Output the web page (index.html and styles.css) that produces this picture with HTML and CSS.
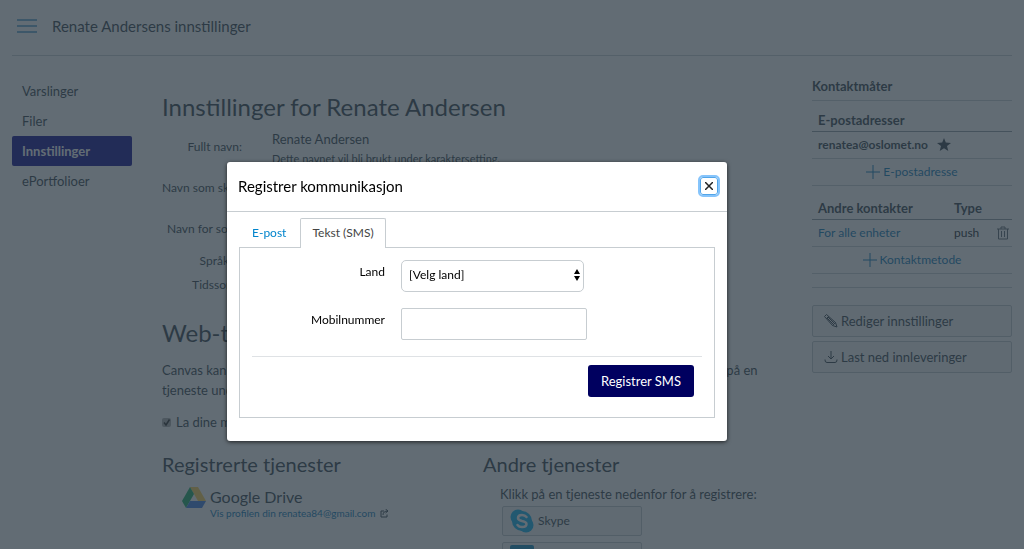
FILE: index.html
```html
<!DOCTYPE html>
<html lang="no">
<head>
<meta charset="utf-8">
<title>Renate Andersens innstillinger</title>
<link rel="stylesheet" href="styles.css">
</head>
<body>
<div class="app">
  <header class="topbar">
    <button class="menu-btn" aria-label="Meny"><svg width="22" height="16" viewBox="0 0 22 16"><path d="M1 2H21M1 8H21M1 14H21" stroke="#3d91c4" stroke-width="1.3" fill="none"/></svg></button>
    <span class="crumb">Renate Andersens innstillinger</span>
  </header>
  <div class="columns">
    <nav class="sidenav">
      <a href="#">Varslinger</a>
      <a href="#">Filer</a>
      <a href="#" class="active">Innstillinger</a>
      <a href="#">ePortfolioer</a>
    </nav>
    <main class="content">
      <h1>Innstillinger for Renate Andersen</h1>
      <dl class="profile">
        <dt class="name-label">Fullt navn:</dt>
        <dd class="name-value"><span>Renate Andersen</span><small>Dette navnet vil bli brukt under karaktersetting.</small></dd>
        <dt class="display-label">Navn som skal vises:</dt><dd></dd>
        <dt class="sort-label">Navn for sortering:</dt><dd></dd>
        <dt class="lang-label">Språk:</dt><dd></dd>
        <dt class="zone-label">Tidssone:</dt><dd></dd>
      </dl>
      <h2>Web-tjenester</h2>
      <p class="intro">Canvas kan gjøre livet ditt enklere ved å knytte seg til verktøy som du kanskje allerede bruker. Klikk på en tjeneste under.</p>
      <label class="check"><input type="checkbox" checked><span class="box"><svg width="9" height="9" viewBox="0 0 9 9"><path d="M2 4.5L4 7L7.500 1.500" fill="none" stroke="#222" stroke-width="1.500"/></svg></span>La dine medstudenter se</label>
      <div class="services">
        <section>
          <h3>Registrerte tjenester</h3>
          <div class="drive">
            <svg width="24" height="22" viewBox="0 0 24 22"><path d="M8 0L16 0L24 14H16Z" fill="#ffd04b"/><path d="M8 0L12 7L4 21L0 14Z" fill="#11a861"/><path d="M8 14H24L20 21H4Z" fill="#3777e3"/></svg>
            <div><div class="drive-name">Google Drive</div>
            <a href="#">Vis profilen din renatea84@gmail.com <svg width="9" height="9" viewBox="0 0 9 9"><path d="M4 2H1V8H7V5.500M3 6Q3 2 8 2M5.500 0L8 2L5.500 4" fill="none" stroke="#2d3b45"/></svg></a></div>
          </div>
        </section>
        <section>
          <h3>Andre tjenester</h3>
          <p>Klikk på en tjeneste nedenfor for å registrere:</p>
          <button class="service"><svg width="24" height="24" viewBox="0 0 24 24"><circle cx="8" cy="8" r="7.500" fill="#00aff0"/><circle cx="16" cy="16" r="7.500" fill="#00aff0"/><circle cx="12" cy="12" r="10" fill="#00aff0"/><path d="M16.500 8Q15 6 12 6Q8 6 8 9Q8 11 12 12Q16.500 13 16.500 15Q16.500 18 12 18Q9 18 7.500 16" fill="none" stroke="#fff" stroke-width="2.500" stroke-linecap="round"/></svg>Skype</button>
          <button class="service" aria-label="LinkedIn"><svg width="24" height="24" viewBox="0 0 24 24"><rect width="24" height="24" rx="2" fill="#0083bd"/></svg></button>
        </section>
      </div>
    </main>
    <aside class="contacts">
      <h4>Kontaktmåter</h4>
      <table class="mail">
        <thead><tr><th>E-postadresser</th></tr></thead>
        <tbody>
          <tr><td><span class="address"><b>renatea@oslomet.no</b><svg width="14" height="13" viewBox="0 0 14 13"><path d="M7 0L8.800 4.600L14 4.900L10 8L11.300 13L7 10.200L2.700 13L4 8L0 4.900L5.200 4.600Z" fill="#2d3b45"/></svg></span></td></tr>
          <tr><td class="add"><a href="#"><svg width="14" height="14" viewBox="0 0 14 14"><path d="M7 0V14M0 7H14" stroke="#0374b5"/></svg>E-postadresse</a></td></tr>
        </tbody>
      </table>
      <table class="others">
        <thead><tr><th>Andre kontakter</th><th>Type</th><th></th></tr></thead>
        <tbody>
          <tr><td><a href="#">For alle enheter</a></td><td class="type">push</td><td class="trash"><svg width="12" height="14" viewBox="0 0 12 14"><path d="M0 3H12M4 3V1H8V3M1.500 3V13H10.500V3M4.500 5V11M7.500 5V11" fill="none" stroke="#56626b"/></svg></td></tr>
          <tr><td class="add" colspan="3"><a href="#"><svg width="14" height="14" viewBox="0 0 14 14"><path d="M7 0V14M0 7H14" stroke="#0374b5"/></svg>Kontaktmetode</a></td></tr>
        </tbody>
      </table>
      <div class="actions">
        <button><svg width="14" height="14" viewBox="0 0 14 14"><path d="M.5 2.500L2.500 .5L11.500 8.500L13 13L8.500 11.500ZM2.500 4.500L4.500 2.500M4 3L11 10M3 4L10 11M8.500 11.500L11.500 8.500" fill="none" stroke="#2d3b45"/></svg>Rediger innstillinger</button>
        <button><svg width="14" height="14" viewBox="0 0 14 14"><path d="M7 1V9M4 6L7 9L10 6M1 9.500V10Q1 12.500 3 12.500H11Q13 12.500 13 10V9.500" fill="none" stroke="#2d3b45"/></svg>Last ned innleveringer</button>
      </div>
    </aside>
  </div>
</div>
<div class="overlay">
  <div class="modal" role="dialog" aria-labelledby="modal-title">
    <div class="modal-head">
      <h2 id="modal-title">Registrer kommunikasjon</h2>
      <button class="close" aria-label="Lukk"><svg width="8" height="8" viewBox="0 0 8 8"><path d="M0 0L8 8M8 0L0 8" stroke="#222" stroke-width="1.500"/></svg></button>
    </div>
    <div class="modal-body">
      <div class="tabs" role="tablist">
        <a href="#" role="tab">E-post</a>
        <a href="#" role="tab" class="selected" aria-selected="true">Tekst (SMS)</a>
      </div>
      <form class="panel">
        <div class="row"><label for="country">Land</label><span class="select"><select id="country"><option>[Velg land]</option></select><svg width="6" height="12" viewBox="0 0 6 12"><path d="M3 0L6 5H0ZM3 12L6 7H0Z"/></svg></span></div>
        <div class="row"><label for="mobile">Mobilnummer</label><input id="mobile" type="tel"></div>
        <div class="foot"><button type="button">Registrer SMS</button></div>
      </form>
    </div>
  </div>
</div>
</body>
</html>
```
FILE: styles.css
```css
* { box-sizing: border-box; }
html, body { height: 100%; }
body { margin: 0; overflow: hidden; background: #fff; color: #2d3b45; font: 13px/20px Lato, "Liberation Sans", sans-serif; }
button, input, select { font: inherit; color: inherit; }
h1, h2, h3, h4, p, dl, dd { margin: 0; font-weight: 400; }
a { color: #0374b5; text-decoration: none; }
svg { display: block; flex: none; }

.app { padding: 0 12px; height: 100%; overflow: hidden; }
.topbar { display: flex; align-items: center; gap: 14px; height: 56px; padding: 0 4px 4px; border-bottom: 1px solid #c7cdd1; }
.menu-btn { padding: 0; border: 0; background: none; }
.crumb { font-size: 15px; }
.columns { display: grid; grid-template-columns: 120px minmax(0, 1fr) 200px; }

.sidenav { padding-top: 20px; }
.sidenav a { display: block; padding: 5px 10px; border-radius: 2px; color: #2d3b45; }
.sidenav .active { background: #00008c; color: #fff; font-weight: 700; }

.content { padding: 34px 48px 0 30px; }
h1, .content h2 { font-size: 24px; line-height: 34px; }
.profile { display: grid; grid-template-columns: 80px 1fr; grid-template-rows: 38px 42px 40px 24px 24px; column-gap: 30px; margin-top: 5px; }
.profile dt { justify-self: end; white-space: nowrap; font-size: 12px; align-self: center; }
.profile dd { align-self: center; }
.profile .name-value { align-self: start; }
.profile small { display: block; font-size: 11px; }
.profile .display-label, .profile .sort-label { justify-self: start; }
.profile .sort-label { padding-left: 5px; }
.profile .lang-label { padding-right: 10px; }
.profile .name-label { align-self: start; padding-top: 8px; }
.content h2 { margin-top: 19px; }
.intro { margin-top: 10px; max-width: 600px; }
.check { display: flex; align-items: center; gap: 5px; margin-top: 12px; }
.check input { position: absolute; opacity: 0; }
.box { border-radius: 2px; background: #aaa; }
.services { display: grid; grid-template-columns: 321px 1fr; margin-top: 19px; white-space: nowrap; }
h3 { font-size: 20px; line-height: 26px; }
.drive { display: flex; gap: 4px; align-items: flex-start; padding: 10px 0 0 20px; }
.drive-name { font-size: 16px; }
.drive a { display: flex; align-items: center; gap: 5px; font-size: 10px; line-height: 12px; }
.services p { padding: 7px 0 2px 17px; }
.service { display: flex; align-items: center; gap: 4px; width: 140px; height: 30px; margin: 0 0 6px 19px; padding: 0 7px; border: 1px solid #c0c6ca; border-radius: 2px; background: #f5f5f5; font-size: 12px; }

.contacts { padding-top: 20px; font-size: 12px; }
.contacts h4 { padding-bottom: 4px; font-size: 13px; font-weight: 700; border-bottom: 1px solid #c7cdd1; }
.contacts table { width: 100%; border-collapse: collapse; }
.contacts th { height: 30px; padding: 8px 6px 0; text-align: left; font-size: 13px; border-bottom: 1px solid #8b969e; }
.contacts td { height: 27px; padding: 0 6px; border-bottom: 1px solid #c7cdd1; }
.address { display: flex; align-items: center; gap: 9px; }
.others { margin-top: 4px; }
.contacts .others th:nth-child(1) { width: 136px; }
.contacts .others th:nth-child(2) { width: 49px; padding-right: 0; }
.contacts .others th:nth-child(3) { width: 15px; padding: 0; }
.contacts .type { color: #0b151c; padding-right: 0; }
.contacts .trash { padding: 0; }
.add a { display: flex; align-items: center; justify-content: center; gap: 3px; }
.actions { display: grid; gap: 4px; margin-top: 13px; padding-top: 17px; border-top: 1px solid #c7cdd1; }
.actions button { display: flex; align-items: center; gap: 3px; height: 32px; padding: 0 11px; border: 1px solid #c0c6ca; border-radius: 2px; background: #f5f5f5; font-size: 13px; }

.overlay { position: fixed; inset: 0; display: flex; justify-content: center; align-items: flex-start; padding: 162px 70px 0 0; background: rgba(45, 59, 69, .75); }
.modal { width: 500px; background: #fff; color: #000; border-radius: 3px; box-shadow: 0 1px 4px rgba(0, 0, 0, .7); }
.modal-head { display: flex; align-items: center; justify-content: space-between; height: 50px; padding: 0 9px 2px 11px; border-bottom: 1px solid #c7cdd1; }
.modal-head h2 { font-size: 15px; }
.close { display: grid; place-items: center; width: 18px; height: 18px; padding: 0; border: 1px solid #52a5e8; border-radius: 3px; background: #fff; outline: 2px solid #86c4fb; }
.modal-body { padding: 6px 12px 23px; }
.tabs { display: flex; padding-left: 1px; font-size: 12px; }
.tabs a { padding: 4px 11px 4px; border: 1px solid transparent; border-bottom: 0; color: #0084cc; }
.tabs .selected { position: relative; margin: 0 0 -1px 2px; padding-bottom: 5px; border-color: #c7cdd1; border-radius: 2px 2px 0 0; background: #fff; color: #444; }
.panel { padding: 12px 12px 20px; border: 1px solid #c7cdd1; }
.row { display: grid; grid-template-columns: 133px 186px; column-gap: 16px; margin-bottom: 16px; font-size: 12px; }
.row label { text-align: right; padding-top: 2px; }
.row input, .row select { width: 100%; height: 32px; padding: 0 7px 2px; border: 1px solid #c7cdd1; border-radius: 2px; background: #fff; }
.row select { appearance: none; border-radius: 5px; }
.select { position: relative; margin-right: 3px; }
.select svg { position: absolute; right: 4px; top: 9px; }
.foot { display: flex; justify-content: flex-end; padding: 8px 8px 0 0; border-top: 1px solid #dfe2e5; }
.foot button { height: 32px; padding: 0 13px; border: 0; border-radius: 3px; background: #00005f; color: #fff; }
```
